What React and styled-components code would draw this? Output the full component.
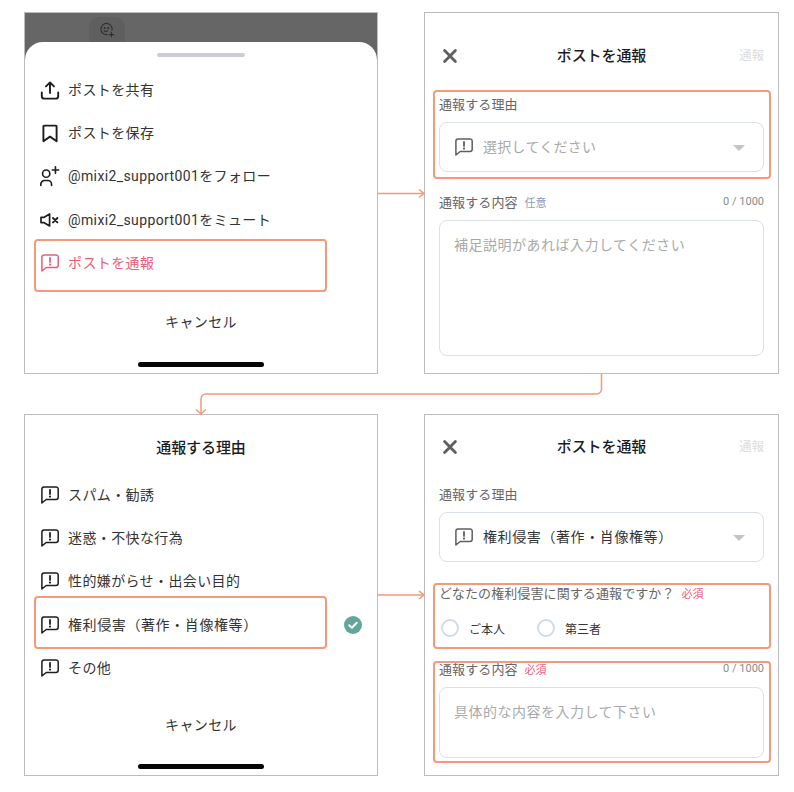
import styled, { createGlobalStyle, css } from "styled-components";

const ACCENT = "#f4997a";

const GlobalStyle = createGlobalStyle`
  html, body {
    margin: 0;
    background: #fff;
  }
  body {
    font-family: Roboto, "Noto Sans CJK JP", sans-serif;
  }
`;

/* ===== icons ===== */

const ReportIcon = ({ color = "#1d1d1f" }) => (
  <svg width="18" height="18" viewBox="0 0 18 18" fill="none">
    <path
      d="M3 .9h12a2.2 2.2 0 0 1 2.2 2.2v8.2a2.2 2.2 0 0 1-2.2 2.2H5.2L.9 17V3.1A2.2 2.2 0 0 1 3 .9z"
      stroke={color}
      strokeWidth="1.5"
      strokeLinejoin="round"
    />
    <path d="M9 3.8v4.3" stroke={color} strokeWidth="1.8" strokeLinecap="round" />
    <circle cx="9" cy="10.6" r="1.1" fill={color} />
  </svg>
);

const ShareIcon = () => (
  <svg width="20" height="20" viewBox="0 0 20 20" fill="none" stroke="#1d1d1f" strokeWidth="1.9" strokeLinecap="round" strokeLinejoin="round">
    <path d="M10 13V2.6M6 6.4 10 2.4l4 4" />
    <path d="M1.8 12.4v3.8a2.4 2.4 0 0 0 2.4 2.4h11.6a2.4 2.4 0 0 0 2.4-2.4v-3.8" />
  </svg>
);

const BookmarkIcon = () => (
  <svg width="20" height="20" viewBox="0 0 20 20" fill="none" stroke="#1d1d1f" strokeWidth="1.9" strokeLinejoin="round">
    <path d="M4 2.6h12a.6.6 0 0 1 .6.6v15L10 13.6 3.4 18.2v-15a.6.6 0 0 1 .6-.6z" />
  </svg>
);

const FollowIcon = () => (
  <svg width="22" height="22" viewBox="0 0 22 22" fill="none" stroke="#1d1d1f" strokeWidth="1.8" strokeLinecap="round">
    <circle cx="6.8" cy="8.4" r="4" />
    <path d="M.9 21.4V20a4 4 0 0 1 4-4h3.8a4 4 0 0 1 4 4v1.4" />
    <path d="M17 .9v7M13.5 4.4h7" />
  </svg>
);

const MuteIcon = () => (
  <svg width="20" height="20" viewBox="0 0 20 20" fill="none" stroke="#1d1d1f" strokeLinejoin="round">
    <path d="M1 7.4h2.8L9.6 4v12l-5.8-3.4H1z" strokeWidth="1.7" />
    <path d="m13 8 4.4 4.4m0-4.4L13 12.4" strokeWidth="1.9" strokeLinecap="round" />
  </svg>
);

const CloseIcon = () => (
  <svg width="14" height="14" viewBox="0 0 14 14" fill="none" stroke="#5f5f5f" strokeWidth="2.8" strokeLinecap="round">
    <path d="m1.6 1.6 10.8 10.8M12.4 1.6 1.6 12.4" />
  </svg>
);

const CheckBadge = () => (
  <svg width="18" height="18" viewBox="0 0 18 18">
    <circle cx="9" cy="9" r="9" fill="#62a69b" />
    <path d="m5.2 9.2 2.7 2.5 4.9-4.9" fill="none" stroke="#fff" strokeWidth="2" strokeLinecap="round" strokeLinejoin="round" />
  </svg>
);

const AddFaceIcon = () => (
  <svg width="16" height="16" viewBox="0 0 16 16" fill="none" stroke="#2f2f2f" strokeWidth="1.1" strokeLinecap="round">
    <path d="M13 8.2A5.6 5.6 0 1 0 8 12.6" />
    <circle cx="5.6" cy="6" r=".5" fill="#2f2f2f" />
    <circle cx="9.2" cy="6" r=".5" fill="#2f2f2f" />
    <path d="M5.2 8.6c.8 1 2.6 1 3.6 0M12.4 10.4v4.4M10.2 12.6h4.4" />
  </svg>
);

/* ===== page ===== */

const Page = styled.div`
  position: relative;
  width: 794px;
  height: 792px;
  box-sizing: border-box;
  padding: 12px 15px 0 24px;
  display: grid;
  grid-template-columns: 354px 355px;
  grid-template-rows: 362px 362px;
  column-gap: 46px;
  row-gap: 40px;
  overflow: hidden;
`;

const Screen = styled.section`
  position: relative;
  box-sizing: border-box;
  border: 1px solid #bcbcbc;
  background: #fff;
  display: flex;
  flex-direction: column;
  overflow: hidden;
`;

const Connector = styled.svg`
  position: absolute;
  left: 0;
  top: 0;
  pointer-events: none;
`;

const markedBox = css`
  position: relative;
  &::after {
    content: "";
    position: absolute;
    box-sizing: border-box;
    border: 2px solid ${ACCENT};
    border-radius: 4px;
    pointer-events: none;
    ${(p) => p.$frame}
  }
`;

/* ===== bottom sheet screens ===== */

const Backdrop = styled.div`
  height: 29px;
  flex: none;
  background: #666;
  display: flex;
  padding-left: 64px;
`;

const ReactionChip = styled.div`
  width: 36px;
  height: 25px;
  margin-top: 4px;
  border-radius: 10px 10px 0 0;
  background: #5f5f5f;
  display: flex;
  align-items: center;
  justify-content: center;
`;

const SheetBack = styled.div`
  flex: 1;
  display: flex;
  flex-direction: column;
  background: #666;
`;

const Sheet = styled.div`
  flex: 1;
  display: flex;
  flex-direction: column;
  background: #fff;
  border-radius: 18px 18px 0 0;
`;

const Grabber = styled.div`
  width: 88px;
  height: 4px;
  margin: 11px auto 0;
  border-radius: 2px;
  background: #ccced1;
`;

const SheetList = styled.div`
  display: flex;
  flex-direction: column;
  padding: ${(p) => p.$top}px 0 0 15px;
`;

const SheetRow = styled.div`
  height: 43.4px;
  display: flex;
  align-items: center;
  gap: 8px;
  font-size: 14px;
  letter-spacing: ${(p) => (p.$wide ? "0.6px" : "0.38px")};
  color: ${(p) => (p.$danger ? "#ec5d78" : "#333")};
  ${(p) => p.$frame && markedBox}
`;

const IconSlot = styled.span`
  width: 20px;
  height: 22px;
  margin-top: 2px;
  flex: none;
  display: flex;
  align-items: center;
  justify-content: center;
`;

const RowCheck = styled.span`
  position: absolute;
  right: 15px;
  top: 50%;
  height: 18px;
  margin-top: -8px;
`;

const CancelRow = styled.div`
  text-align: center;
  font-size: 14px;
  letter-spacing: 0.4px;
  color: #333;
  line-height: 20px;
  margin-top: ${(p) => p.$top}px;
`;

const HomeBar = styled.div`
  width: 126px;
  height: 5px;
  margin: auto auto 6px;
  border-radius: 3px;
  background: #050505;
`;

const SheetTitle = styled.h2`
  margin: 23px 0 0;
  text-align: center;
  font-size: 15px;
  line-height: 20px;
  font-weight: 500;
  letter-spacing: -0.1px;
  color: #1d1d1f;
`;

/* ===== form screens ===== */

const Header = styled.header`
  display: grid;
  grid-template-columns: 1fr auto 1fr;
  align-items: center;
  height: 20px;
  margin: ${(p) => p.$top}px 14px 0;
`;

const CloseButton = styled.span`
  display: flex;
  margin: 2px 0 0 4px;
`;

const HeaderTitle = styled.h2`
  margin: 0;
  font-size: 15px;
  font-weight: 500;
  letter-spacing: -0.1px;
  color: #1d1d1f;
`;

const HeaderAction = styled.span`
  justify-self: end;
  font-size: 12.5px;
  color: #dcdcdc;
`;

const Form = styled.div`
  display: flex;
  flex-direction: column;
  padding: 0 14px;
`;

const Field = styled.div`
  display: flex;
  flex-direction: column;
  margin-top: ${(p) => p.$top}px;
  ${(p) => p.$frame && markedBox}
`;

const LabelRow = styled.div`
  display: flex;
  align-items: center;
  box-sizing: border-box;
  height: 18px;
  padding-bottom: 3px;
  font-size: 13px;
  font-weight: 400;
  letter-spacing: 0.1px;
  color: #666;
`;

const Tag = styled.span`
  margin-left: 7px;
  font-size: 11px;
  letter-spacing: 0;
  color: ${(p) => (p.$required ? "#ec5d78" : "#8c9bb8")};
`;

const Counter = styled.span`
  margin-left: auto;
  font-size: 11px;
  letter-spacing: 0;
  color: #8a8a8a;
`;

const SelectBox = styled.div`
  display: flex;
  align-items: center;
  gap: 10px;
  height: 50px;
  box-sizing: border-box;
  margin-top: 8px;
  padding: 0 18px 2px 15px;
  border: 1px solid #d9e0ea;
  border-radius: 8px;
  font-size: 14px;
  letter-spacing: ${(p) => (p.$filled ? "0.6px" : "0.28px")};
  color: ${(p) => (p.$filled ? "#333" : "#a9a9a9")};
`;

const SelectIcon = styled.span`
  display: flex;
  margin-top: 2px;
`;

const Caret = styled.span`
  margin: 3px 0 0 auto;
  width: 0;
  height: 0;
  border-left: 6px solid transparent;
  border-right: 6px solid transparent;
  border-top: 6px solid #c4c4c4;
`;

const TextArea = styled.div`
  box-sizing: border-box;
  height: ${(p) => p.$height}px;
  margin-top: 8px;
  padding: 14px;
  border: 1px solid #d9e0ea;
  border-radius: 8px;
  font-size: 14px;
  line-height: 20px;
  letter-spacing: 0.5px;
  color: #a9a9a9;
`;

const RadioGroup = styled.div`
  display: flex;
  gap: 32px;
  margin: 15px 0 0 2px;
  height: 20px;
`;

const RadioOption = styled.label`
  display: flex;
  align-items: center;
  gap: 10px;
  font-size: 12px;
  color: #333;
`;

const RadioDot = styled.span`
  width: 18px;
  height: 18px;
  box-sizing: border-box;
  border: 2px solid #cfdaea;
  border-radius: 50%;
`;

const shareRows = [
  { icon: <ShareIcon />, text: "ポストを共有" },
  { icon: <BookmarkIcon />, text: "ポストを保存" },
  { icon: <FollowIcon />, text: "@mixi2_support001をフォロー" },
  { icon: <MuteIcon />, text: "@mixi2_support001をミュート" },
];

const reasons = ["スパム・勧誘", "迷惑・不快な行為", "性的嫌がらせ・出会い目的"];

export default function App() {
  return (
    <Page>
      <GlobalStyle />

      {/* ===== top left: post menu ===== */}
      <Screen>
        <Backdrop>
          <ReactionChip>
            <AddFaceIcon />
          </ReactionChip>
        </Backdrop>
        <SheetBack>
          <Sheet>
            <Grabber />
            <SheetList $top={10}>
              {shareRows.map((row) => (
                <SheetRow key={row.text}>
                  <IconSlot>{row.icon}</IconSlot>
                  {row.text}
                </SheetRow>
              ))}
              <SheetRow $danger $frame="left: -6px; top: -1.5px; width: 293px; height: 53px;">
                <IconSlot>
                  <ReportIcon color="#ec5d78" />
                </IconSlot>
                ポストを通報
              </SheetRow>
            </SheetList>
            <CancelRow $top={28}>キャンセル</CancelRow>
            <HomeBar />
          </Sheet>
        </SheetBack>
      </Screen>

      {/* ===== top right: empty form ===== */}
      <Screen>
        <Header $top={31}>
          <CloseButton>
            <CloseIcon />
          </CloseButton>
          <HeaderTitle>ポストを通報</HeaderTitle>
          <HeaderAction>通報</HeaderAction>
        </Header>
        <Form>
          <Field $top={32} $frame="left: -6px; right: -7px; top: -6px; bottom: -7px;">
            <LabelRow>通報する理由</LabelRow>
            <SelectBox>
              <SelectIcon>
                <ReportIcon color="#5f5f5f" />
              </SelectIcon>
              選択してください
              <Caret />
            </SelectBox>
          </Field>
          <Field $top={22}>
            <LabelRow>
              通報する内容
              <Tag>任意</Tag>
              <Counter>0 / 1000</Counter>
            </LabelRow>
            <TextArea $height={136}>補足説明があれば入力してください</TextArea>
          </Field>
        </Form>
      </Screen>

      {/* ===== bottom left: reason picker ===== */}
      <Screen>
        <SheetTitle>通報する理由</SheetTitle>
        <SheetList $top={14}>
          {reasons.map((text) => (
            <SheetRow key={text}>
              <IconSlot>
                <ReportIcon />
              </IconSlot>
              {text}
            </SheetRow>
          ))}
          <SheetRow $wide $frame="left: -6px; top: -6px; width: 293px; height: 53px;">
            <IconSlot>
              <ReportIcon />
            </IconSlot>
            権利侵害（著作・肖像権等）
            <RowCheck>
              <CheckBadge />
            </RowCheck>
          </SheetRow>
          <SheetRow>
            <IconSlot>
              <ReportIcon />
            </IconSlot>
            その他
          </SheetRow>
        </SheetList>
        <CancelRow $top={26}>キャンセル</CancelRow>
        <HomeBar />
      </Screen>

      {/* ===== bottom right: filled form ===== */}
      <Screen>
        <Header $top={20}>
          <CloseButton>
            <CloseIcon />
          </CloseButton>
          <HeaderTitle>ポストを通報</HeaderTitle>
          <HeaderAction>通報</HeaderAction>
        </Header>
        <Form>
          <Field $top={31}>
            <LabelRow>通報する理由</LabelRow>
            <SelectBox $filled>
              <SelectIcon>
                <ReportIcon color="#5f5f5f" />
              </SelectIcon>
              権利侵害（著作・肖像権等）
              <Caret />
            </SelectBox>
          </Field>
          <Field $top={23} $frame="left: -6px; right: -7px; top: -2px; bottom: -11px;">
            <LabelRow>
              どなたの権利侵害に関する通報ですか？
              <Tag $required>必須</Tag>
            </LabelRow>
            <RadioGroup>
              <RadioOption>
                <RadioDot />
                ご本人
              </RadioOption>
              <RadioOption>
                <RadioDot />
                第三者
              </RadioOption>
            </RadioGroup>
          </Field>
          <Field $top={23} $frame="left: -6px; right: -7px; top: 0; bottom: -5px;">
            <LabelRow>
              通報する内容
              <Tag $required>必須</Tag>
              <Counter>0 / 1000</Counter>
            </LabelRow>
            <TextArea $height={71}>具体的な内容を入力して下さい</TextArea>
          </Field>
        </Form>
      </Screen>

      {/* ===== connectors between the screens ===== */}
      <Connector width="794" height="792" viewBox="0 0 794 792" fill="none" stroke={ACCENT} strokeWidth="1.5">
        <path d="M378 193.5h46M419 189.5l5 4-5 4" />
        <path d="M601.5 374v15a5 5 0 0 1-5 5H206a5 5 0 0 0-5 5v15M196 409.5l5 4.5 5-4.5" />
        <path d="M378 595h46M419 591l5 4-5 4" />
      </Connector>
    </Page>
  );
}
